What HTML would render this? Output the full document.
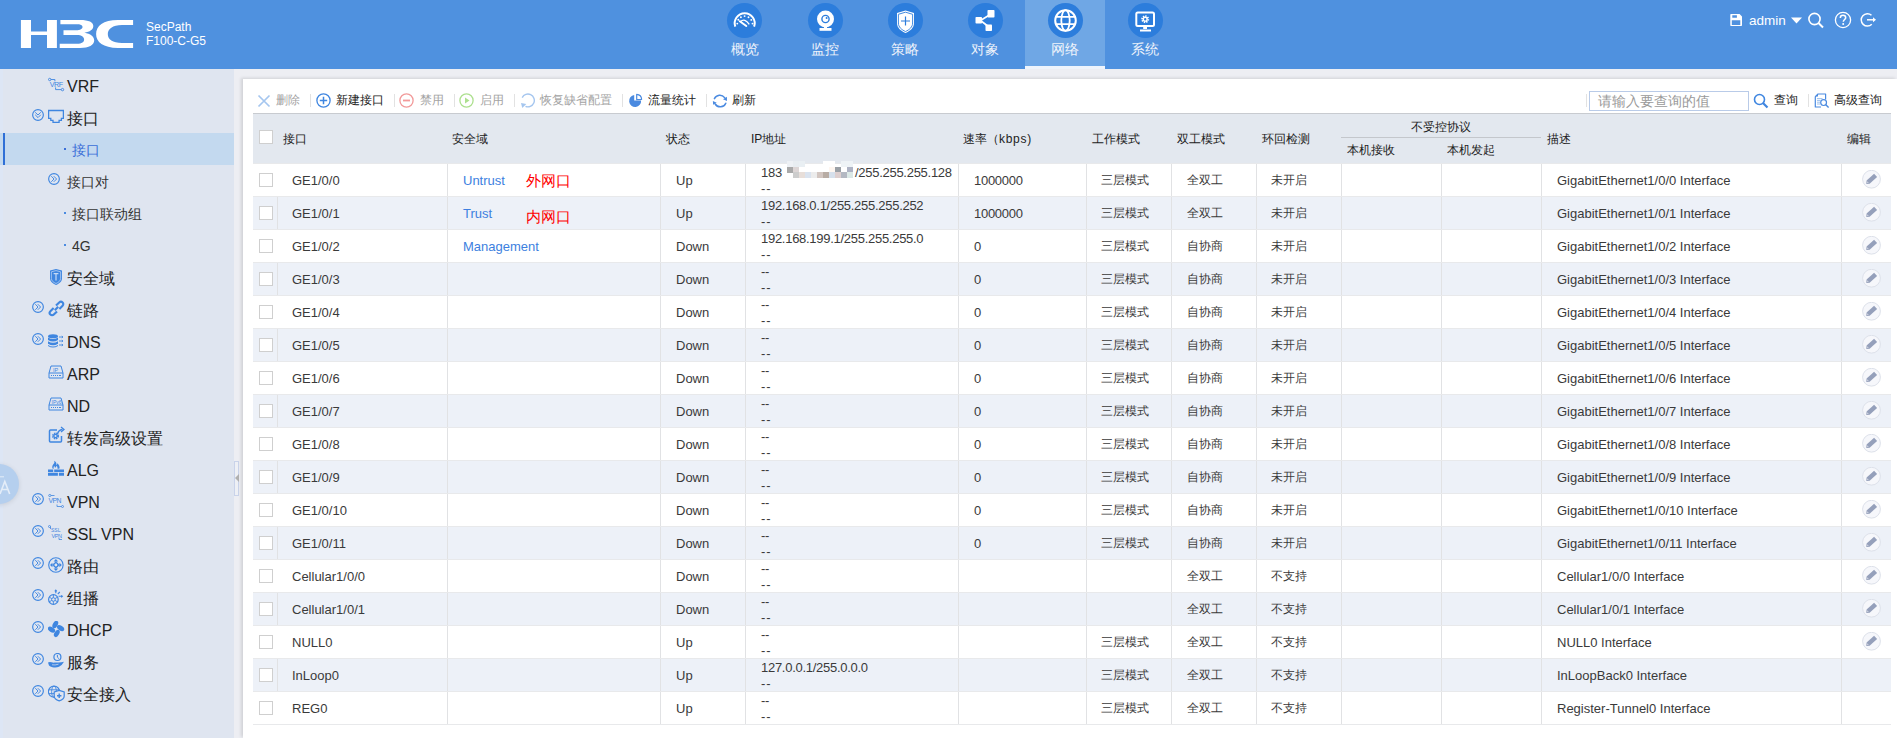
<!DOCTYPE html>
<html><head><meta charset="utf-8"><title>H3C</title>
<style>
*{box-sizing:border-box;margin:0;padding:0}
html,body{width:1897px;height:738px;overflow:hidden}
body{position:relative;background:#edeef3;font-family:"Liberation Sans",sans-serif;color:#333}
.abs{position:absolute}
#hdr{position:absolute;left:0;top:0;width:1897px;height:69px;background:#4f91df}
.nav{position:absolute;top:0;width:80px;height:69px;text-align:center;color:#eef3fb}
.nav.on{background:#6fa7e5}
.nav.on:after{content:"";position:absolute;left:0;right:0;bottom:0;height:3px;background:#eef4fc}
.nav .c{position:absolute;left:22px;top:3px;width:35px;height:35px;border-radius:50%;background:#2c7ddc}
.nav .c svg{position:absolute;left:0;top:0}
.nav .t{position:absolute;left:0;width:80px;top:40px;font-size:14px;line-height:18px;text-align:center}
#side{position:absolute;left:0;top:69px;width:234px;height:669px;background:#dfe5f0;overflow:hidden}
#side .strip{position:absolute;left:0;top:0;width:3px;height:669px;background:#dde6f5}
.si{position:absolute;left:0;width:234px;height:32px;color:#222}
.si .tx{position:absolute;left:67px;top:2px;line-height:32px;font-size:16px;white-space:nowrap}
.si.l2 .tx{font-size:14px;color:#333;top:1px}
.si.sel{background:#c3d9ef}
.si.sel:before{content:"";position:absolute;left:3px;top:0;width:2px;height:32px;background:#2f6fd6}
.si.sel .tx{color:#3b6fd8}
.si svg{position:absolute}
.dot{position:absolute;left:64px;top:15px;width:2px;height:2px;background:#4a8ae0}
#panel{position:absolute;left:243px;top:79px;width:1654px;height:659px;background:#fff;box-shadow:-2px -1px 3px rgba(0,0,0,0.12)}
.tb{position:absolute;top:0;height:20px;font-size:12px;line-height:20px;white-space:nowrap}
.sep{position:absolute;width:1px;height:13px;background:#e2e2e2}
#tbl{position:absolute;left:253px;top:113px;width:638px}
.row{position:absolute;left:253px;width:1638px;height:33px;border-top:1px solid #e8e9eb}
.row.st{background:#edf1f8}
.cell{position:absolute;top:0px;height:33px;line-height:33px;font-size:13px;white-space:nowrap;color:#3a3a3a}
.vl{position:absolute;top:0;width:1px;height:32px;background:#e1e2e4}
.cb{position:absolute;left:6px;top:9px;width:14px;height:14px;border:1px solid #cfcfcf;background:#fff}
.cj{font-size:12px}
.ip{letter-spacing:-0.28px}
</style></head><body>

<div id="hdr">
<svg class="abs" style="left:0;top:0" width="140" height="60" viewBox="0 0 140 60">
<path fill="#fff" d="M20.9 19.9H31V31.5H47V19.9H56.9V47.9H47V35H31V47.9H20.9Z"/>
<path fill="#fff" d="M60.4 19.9H80C89 19.9 93.3 22 93.3 26C93.3 29.5 90 31.8 84.4 32.8C90.5 33.8 94.2 36.5 94.2 40.5C94.2 45 89 47.9 80 47.9H59.7V43.8H77C82 43.8 84.1 42 84.1 39.5C84.1 36.8 81.5 35 77 35H63.5V30.2H76C80.5 30.2 82.5 28.8 82.5 27C82.5 25 80.5 24.2 76 24.2H60.4Z"/>
<path fill="#fff" d="M133.1 19.9V24.9H122C112.5 24.9 107.8 29 107.8 34C107.8 39.5 112.5 42.9 122 42.9H133.1V47.9H118C103 47.9 96.1 42 96.1 34C96.1 26 103 19.9 118 19.9Z"/>
</svg>
<div class="abs" style="left:146px;top:20px;font-size:12px;line-height:14px;color:#fff">SecPath<br>F100-C-G5</div>
<div class="nav" style="left:705px"><div class="c" style="left:22px"><svg width="35" height="35" viewBox="0 0 35 35"><path d="M8.3 23.7A10 10 0 1 1 27.1 23.7" fill="none" stroke="#fff" stroke-width="2"/>
 <g fill="#fff"><circle cx="11.3" cy="16.7" r="0.95"/><circle cx="10.3" cy="20.6" r="0.95"/><circle cx="13.9" cy="14.3" r="0.95"/><circle cx="17.6" cy="13.1" r="0.95"/><circle cx="21.5" cy="14.3" r="0.95"/><circle cx="24.3" cy="16.9" r="0.95"/><circle cx="25.5" cy="20.6" r="0.95"/></g>
 <path d="M12.8 18.3L19.3 23" stroke="#fff" stroke-width="2" stroke-linecap="round"/><path d="M13.7 18.5Q17.6 14.8 22.3 21.3" stroke="#fff" stroke-width="1.4" fill="none"/></svg></div><div class="t">概览</div></div>
<div class="nav" style="left:785px"><div class="c" style="left:23px"><svg width="35" height="35" viewBox="0 0 35 35"><circle cx="17.5" cy="16" r="8.5" fill="#fff"/><circle cx="17.5" cy="16" r="3.6" fill="none" stroke="#2c7ddc" stroke-width="1.4"/><circle cx="18.6" cy="15" r="1" fill="#2c7ddc"/>
 <rect x="16" y="23" width="3" height="4" fill="#fff"/><rect x="11.5" y="25" width="12" height="2.8" fill="#fff"/></svg></div><div class="t">监控</div></div>
<div class="nav" style="left:865px"><div class="c" style="left:23px"><svg width="35" height="35" viewBox="0 0 35 35"><path d="M17.5 7.5L26 10V20C26 25 22 28 17.5 30C13 28 9 25 9 20V10Z" fill="#fff"/>
 <path d="M17.5 9.2L24.6 11.3V20C24.6 24.2 21.3 26.8 17.5 28.5C13.7 26.8 10.4 24.2 10.4 20V11.3Z" fill="none" stroke="#2c7ddc" stroke-width="0.9"/>
 <path d="M17.5 13.5V22.5M13 18H22" stroke="#2c7ddc" stroke-width="1.2"/></svg></div><div class="t">策略</div></div>
<div class="nav" style="left:945px"><div class="c" style="left:23px"><svg width="35" height="35" viewBox="0 0 35 35"><path d="M12.5 17.5L23 11M12.5 17.5L21 24" stroke="#fff" stroke-width="1.6"/>
 <rect x="7.5" y="14" width="6.5" height="6.5" rx="0.8" fill="#fff"/><rect x="19.5" y="7" width="7" height="7.5" rx="0.8" fill="#fff"/><rect x="17.5" y="21.5" width="6.5" height="6.5" rx="0.8" fill="#fff"/></svg></div><div class="t">对象</div></div>
<div class="nav on" style="left:1025px"><div class="c" style="left:23px"><svg width="35" height="35" viewBox="0 0 35 35"><circle cx="17.5" cy="17.5" r="10.3" fill="none" stroke="#fff" stroke-width="2"/>
 <ellipse cx="17.5" cy="17.5" rx="4.2" ry="10.3" fill="none" stroke="#fff" stroke-width="1.8"/>
 <path d="M7.5 13.8H27.5M7.5 21.2H27.5" stroke="#fff" stroke-width="1.8"/></svg></div><div class="t">网络</div></div>
<div class="nav" style="left:1105px"><div class="c" style="left:23px"><svg width="35" height="35" viewBox="0 0 35 35"><rect x="8.3" y="9.5" width="17.7" height="13.5" rx="1.5" fill="none" stroke="#fff" stroke-width="2"/>
 <rect x="15.2" y="23" width="3.8" height="3" fill="#fff"/><rect x="12" y="26.5" width="11" height="2" fill="#fff"/>
 <circle cx="17.2" cy="16.2" r="3" fill="none" stroke="#fff" stroke-width="2" stroke-dasharray="1.3 1"/><circle cx="17.2" cy="16.2" r="1.9" fill="none" stroke="#fff" stroke-width="1.4"/></svg></div><div class="t">系统</div></div>
<svg class="abs" style="left:1730px;top:14px" width="12" height="12" viewBox="0 0 12 12">
<path fill="#fff" fill-rule="evenodd" d="M0.3 0.8Q0.3 0 1 0H9.6L12 2.4V11.3Q12 12 11.3 12H1Q0.3 12 0.3 11.3ZM2.3 1.2V3.8H6.9V1.2ZM1.8 6.2V10.9H10.3V6.2Z"/>
</svg>
<div class="abs" style="left:1749px;top:12px;font-size:13.5px;line-height:18px;color:#fff">admin</div>
<svg class="abs" style="left:1790px;top:17px" width="13" height="7" viewBox="0 0 13 7"><path d="M1 0.5H12L6.5 6.5Z" fill="#fff"/></svg>
<svg class="abs" style="left:1807px;top:12px" width="18" height="17" viewBox="0 0 18 17"><circle cx="7.5" cy="7" r="5.6" fill="none" stroke="#fff" stroke-width="1.6"/><path d="M11.5 11L16 15.5" stroke="#fff" stroke-width="2"/></svg>
<svg class="abs" style="left:1834px;top:11px" width="18" height="18" viewBox="0 0 18 18"><circle cx="9" cy="9" r="7.6" fill="none" stroke="#fff" stroke-width="1.3"/><path d="M6.3 7C6.3 5.2 7.5 4.3 9 4.3C10.6 4.3 11.7 5.3 11.7 6.7C11.7 8.4 9.3 8.8 9.3 10.8" fill="none" stroke="#fff" stroke-width="1.5"/><circle cx="9.2" cy="13" r="1" fill="#fff"/></svg>
<svg class="abs" style="left:1859px;top:12px" width="18" height="16" viewBox="0 0 18 16"><path d="M12.5 3.2A6.2 6.2 0 1 0 12.8 12.3" fill="none" stroke="#fff" stroke-width="1.5"/><path d="M8 7.8H15.5" stroke="#fff" stroke-width="1.5"/><path d="M14 5.3L17 7.8L14 10.3Z" fill="#fff"/></svg>
</div>
<div id="side"><div class="strip"></div>
<div class="si" style="top:0px"><svg style="left:48px;top:8px" width="17" height="15" viewBox="0 0 17 15"><circle cx="1.7" cy="2.5" r="1.2" fill="none" stroke="#3f86e0" stroke-width="0.9"/><path d="M2.9 2.5H6.9V4.3" stroke="#3f86e0" stroke-width="0.9" fill="none"/><text x="1.8" y="9.9" font-size="7.2" font-family="Liberation Sans" fill="#3f86e0" letter-spacing="-0.5" transform="scale(1 1)">VRF</text><path d="M7.6 10.4V12.6H13.2" stroke="#3f86e0" stroke-width="0.9" fill="none"/><circle cx="14.5" cy="12.6" r="1.2" fill="none" stroke="#3f86e0" stroke-width="0.9"/></svg><div class="tx">VRF</div></div>
<div class="si" style="top:32px"><svg style="left:32px;top:8px" width="12" height="12" viewBox="0 0 12 12"><circle cx="6" cy="6" r="5.35" fill="none" stroke="#3f86e0" stroke-width="1.15"/><path d="M3.2 3.3L6 6L8.8 3.3M3.2 5.8L6 8.6L8.8 5.8" fill="none" stroke="#3f86e0" stroke-width="0.95"/></svg><svg style="left:48px;top:8px" width="16" height="15" viewBox="0 0 16 15"><path d="M0.6 1.5H15.4V9.4H13.4V11.3H11.1V13.4H5V11.3H2.8V9.4H0.6Z" fill="none" stroke="#3f86e0" stroke-width="1.3"/></svg><div class="tx">接口</div></div>
<div class="si l2 sel" style="top:64px"><div class="dot" style="background:#3b6fd8"></div><div class="tx" style="left:72px">接口</div></div>
<div class="si l2" style="top:96px"><svg style="left:48px;top:8px" width="12" height="12" viewBox="0 0 12 12"><circle cx="6" cy="6" r="5.35" fill="none" stroke="#3f86e0" stroke-width="1.15"/><path d="M3.3 3.2L6 6L3.3 8.8M5.8 3.2L8.6 6L5.8 8.8" fill="none" stroke="#3f86e0" stroke-width="0.95"/></svg><div class="tx">接口对</div></div>
<div class="si l2" style="top:128px"><div class="dot"></div><div class="tx" style="left:72px">接口联动组</div></div>
<div class="si l2" style="top:160px"><div class="dot"></div><div class="tx" style="left:72px">4G</div></div>
<div class="si" style="top:192px"><svg style="left:49px;top:7px" width="14" height="18" viewBox="0 0 14 18"><path d="M7 1L13 2.6V10.5C13 13.5 10.5 15.5 7 17C3.5 15.5 1 13.5 1 10.5V2.6Z" fill="#3f86e0"/><path d="M7 2.6L11.6 3.8V10.4C11.6 12.8 9.6 14.4 7 15.5C4.4 14.4 2.4 12.8 2.4 10.4V3.8Z" fill="none" stroke="#c5daf5" stroke-width="0.7"/><path d="M4.6 5.6H9.4M7 5.6V12.5" stroke="#c5daf5" stroke-width="1.2"/></svg><div class="tx">安全域</div></div>
<div class="si" style="top:224px"><svg style="left:32px;top:8px" width="12" height="12" viewBox="0 0 12 12"><circle cx="6" cy="6" r="5.35" fill="none" stroke="#3f86e0" stroke-width="1.15"/><path d="M3.3 3.2L6 6L3.3 8.8M5.8 3.2L8.6 6L5.8 8.8" fill="none" stroke="#3f86e0" stroke-width="0.95"/></svg><svg style="left:48px;top:7px" width="17" height="17" viewBox="0 0 17 17"><g fill="none" stroke="#3f86e0" stroke-width="2.1"><path d="M6.8 10.2L10.2 6.8"/><path d="M5.6 8L2.4 11.2A2.2 2.2 0 0 0 5.8 14.6L9 11.4"/><path d="M8 5.6L11.2 2.4A2.2 2.2 0 0 1 14.6 5.8L11.4 9"/></g></svg><div class="tx">链路</div></div>
<div class="si" style="top:256px"><svg style="left:32px;top:8px" width="12" height="12" viewBox="0 0 12 12"><circle cx="6" cy="6" r="5.35" fill="none" stroke="#3f86e0" stroke-width="1.15"/><path d="M3.3 3.2L6 6L3.3 8.8M5.8 3.2L8.6 6L5.8 8.8" fill="none" stroke="#3f86e0" stroke-width="0.95"/></svg><svg style="left:48px;top:9px" width="16" height="14" viewBox="0 0 16 14"><g fill="#3f86e0"><ellipse cx="5" cy="2.2" rx="5" ry="2"/><path d="M0 3.5Q5 6.5 10 3.5V6Q5 9 0 6Z"/><path d="M0 7.3Q5 10.3 10 7.3V9.8Q5 12.8 0 9.8Z"/><path d="M0 11Q5 14 10 11V12Q5 15 0 12Z"/></g><path d="M11 3H15M11 7H15M11 11H15" stroke="#3f86e0" stroke-width="0.9"/><path d="M13.8 2L15 3L13.8 4M13.8 6L15 7L13.8 8M13.8 10L15 11L13.8 12" stroke="#3f86e0" stroke-width="0.8" fill="none"/></svg><div class="tx">DNS</div></div>
<div class="si" style="top:288px"><svg style="left:48px;top:8px" width="16" height="14" viewBox="0 0 16 14"><path d="M3 1H13L15 8V13H1V8Z" fill="none" stroke="#3f86e0" stroke-width="1"/><path d="M1 8H15" stroke="#3f86e0" stroke-width="1"/><text x="5" y="6.8" font-size="5.5" font-family="Liberation Sans" fill="#3f86e0">IP</text><path d="M3 10.5H4M5 10.5H6M7 10.5H8M9 10.5H10M11 10.5H13" stroke="#3f86e0" stroke-width="1.2"/></svg><div class="tx">ARP</div></div>
<div class="si" style="top:320px"><svg style="left:48px;top:8px" width="16" height="14" viewBox="0 0 16 14"><path d="M3 1H13L15 8V13H1V8Z" fill="none" stroke="#3f86e0" stroke-width="1"/><path d="M1 8H15" stroke="#3f86e0" stroke-width="1"/><text x="3.5" y="6.8" font-size="5" font-family="Liberation Sans" fill="#3f86e0">IPv6</text><path d="M3 10.5H4M5 10.5H6M7 10.5H8M9 10.5H10M11 10.5H13" stroke="#3f86e0" stroke-width="1.2"/></svg><div class="tx">ND</div></div>
<div class="si" style="top:352px"><svg style="left:48px;top:5px" width="17" height="17" viewBox="0 0 17 17"><path d="M9 4H2.5Q1.5 4 1.5 5V15Q1.5 16 2.5 16H12.5Q13.5 16 13.5 15V10" fill="none" stroke="#3f86e0" stroke-width="1.5"/><path d="M9.5 8.5Q10 4 14.5 3.5" fill="none" stroke="#3f86e0" stroke-width="1.3"/><path d="M13 1L16 3.5L13 6" fill="none" stroke="#3f86e0" stroke-width="1.3"/><circle cx="7.5" cy="10" r="2.6" fill="none" stroke="#3f86e0" stroke-width="1.8" stroke-dasharray="1.4 0.7"/><circle cx="7.5" cy="10" r="1.6" fill="none" stroke="#3f86e0" stroke-width="1.2"/></svg><div class="tx">转发高级设置</div></div>
<div class="si" style="top:384px"><svg style="left:48px;top:6px" width="17" height="18" viewBox="0 0 17 18"><path d="M4.5 9.6C3.6 7.5 5 5.5 6.3 4C6.6 3 6.3 2.4 6 1.8C8 2.3 8.8 4.5 8.3 6.2C8.9 5.6 9.3 4.8 9.5 4.2C10.9 5.5 12.3 8 11.3 9.8H9.5C9.7 8.6 9.2 7.4 8.5 6.8C8.3 7.9 7.6 8.6 7 9C7 8.2 6.6 7.5 6.2 7.1C5.6 7.8 5.4 8.8 5.9 9.8Z" fill="#3f86e0"/><path d="M0 10.4H5.2V13H0ZM6.2 10.4H16V13H6.2ZM0 13.8H9.9V16.8H0ZM10.9 13.8H16V16.8H10.9Z" fill="#3f86e0"/></svg><div class="tx">ALG</div></div>
<div class="si" style="top:416px"><svg style="left:32px;top:8px" width="12" height="12" viewBox="0 0 12 12"><circle cx="6" cy="6" r="5.35" fill="none" stroke="#3f86e0" stroke-width="1.15"/><path d="M3.3 3.2L6 6L3.3 8.8M5.8 3.2L8.6 6L5.8 8.8" fill="none" stroke="#3f86e0" stroke-width="0.95"/></svg><svg style="left:48px;top:9px" width="16" height="14" viewBox="0 0 16 14"><circle cx="1.8" cy="1.5" r="1.1" fill="none" stroke="#3f86e0" stroke-width="0.8"/><path d="M3 1.5H6.5" stroke="#3f86e0" stroke-width="0.8"/><text x="0.5" y="9" font-size="6.8" font-family="Liberation Sans" fill="#3f86e0" letter-spacing="-0.5">VPN</text><path d="M9 10.5V12.5H13.5" stroke="#3f86e0" stroke-width="0.8" fill="none"/><circle cx="14.5" cy="12.5" r="1" fill="none" stroke="#3f86e0" stroke-width="0.8"/></svg><div class="tx">VPN</div></div>
<div class="si" style="top:448px"><svg style="left:32px;top:8px" width="12" height="12" viewBox="0 0 12 12"><circle cx="6" cy="6" r="5.35" fill="none" stroke="#3f86e0" stroke-width="1.15"/><path d="M3.3 3.2L6 6L3.3 8.8M5.8 3.2L8.6 6L5.8 8.8" fill="none" stroke="#3f86e0" stroke-width="0.95"/></svg><svg style="left:48px;top:8px" width="16" height="16" viewBox="0 0 16 16"><circle cx="1.5" cy="1.5" r="1" fill="none" stroke="#3f86e0" stroke-width="0.8"/><path d="M2.5 1.5V4" stroke="#3f86e0" stroke-width="0.8"/><text x="3" y="7" font-size="5" font-family="Liberation Sans" fill="#3f86e0">SSL</text><text x="3.5" y="12.5" font-size="5.5" font-family="Liberation Sans" fill="#3f86e0" letter-spacing="-0.4">VPN</text><path d="M11 13V14.5H14" stroke="#3f86e0" stroke-width="0.8" fill="none"/></svg><div class="tx">SSL VPN</div></div>
<div class="si" style="top:480px"><svg style="left:32px;top:8px" width="12" height="12" viewBox="0 0 12 12"><circle cx="6" cy="6" r="5.35" fill="none" stroke="#3f86e0" stroke-width="1.15"/><path d="M3.3 3.2L6 6L3.3 8.8M5.8 3.2L8.6 6L5.8 8.8" fill="none" stroke="#3f86e0" stroke-width="0.95"/></svg><svg style="left:48px;top:8px" width="16" height="16" viewBox="0 0 16 16"><circle cx="7.9" cy="8" r="7.2" fill="none" stroke="#3f86e0" stroke-width="1.1"/><path d="M7.9 2.1L10.2 4.5H5.6ZM7.9 13.9L10.2 11.5H5.6ZM2 8L4.4 5.7V10.3ZM13.8 8L11.4 5.7V10.3Z" fill="#3f86e0"/><path d="M7.9 4.4V5.9M7.9 10.1V11.6M4.3 8H5.8M10 8H11.5" stroke="#3f86e0" stroke-width="1.6"/><circle cx="7.9" cy="8" r="2.1" fill="none" stroke="#3f86e0" stroke-width="1.3"/></svg><div class="tx">路由</div></div>
<div class="si" style="top:512px"><svg style="left:32px;top:8px" width="12" height="12" viewBox="0 0 12 12"><circle cx="6" cy="6" r="5.35" fill="none" stroke="#3f86e0" stroke-width="1.15"/><path d="M3.3 3.2L6 6L3.3 8.8M5.8 3.2L8.6 6L5.8 8.8" fill="none" stroke="#3f86e0" stroke-width="0.95"/></svg><svg style="left:48px;top:8px" width="17" height="17" viewBox="0 0 17 17"><circle cx="5.4" cy="10.5" r="4.8" fill="none" stroke="#3f86e0" stroke-width="1.2"/><circle cx="5.4" cy="10.5" r="1.8" fill="none" stroke="#3f86e0" stroke-width="1"/><path d="M5.4 5.7V8.7M5.4 12.3V15.3M1.2 8.1L3.8 9.6M7 11.4L9.6 12.9M1.2 12.9L3.8 11.4M7 9.6L9.6 8.1" stroke="#3f86e0" stroke-width="0.9"/><path d="M7.8 4.2V1.5M6.8 2.4L7.8 1.2L8.8 2.4M9.8 5L11.8 3M10.6 7.3H14.2M13.2 6.3L14.4 7.3L13.2 8.3" fill="none" stroke="#3f86e0" stroke-width="1.1"/></svg><div class="tx">组播</div></div>
<div class="si" style="top:544px"><svg style="left:32px;top:8px" width="12" height="12" viewBox="0 0 12 12"><circle cx="6" cy="6" r="5.35" fill="none" stroke="#3f86e0" stroke-width="1.15"/><path d="M3.3 3.2L6 6L3.3 8.8M5.8 3.2L8.6 6L5.8 8.8" fill="none" stroke="#3f86e0" stroke-width="0.95"/></svg><svg style="left:48px;top:8px" width="17" height="17" viewBox="0 0 17 17"><g fill="#3f86e0"><ellipse cx="7.3" cy="3.5" rx="4" ry="2.4" transform="rotate(-60 7.3 3.5)"/><ellipse cx="12.6" cy="7.1" rx="4" ry="2.4" transform="rotate(32 12.6 7.1)"/><ellipse cx="8.8" cy="12.4" rx="4" ry="2.4" transform="rotate(-60 8.8 12.4)"/><ellipse cx="3.5" cy="8.6" rx="4" ry="2.4" transform="rotate(32 3.5 8.6)"/></g></svg><div class="tx">DHCP</div></div>
<div class="si" style="top:576px"><svg style="left:32px;top:8px" width="12" height="12" viewBox="0 0 12 12"><circle cx="6" cy="6" r="5.35" fill="none" stroke="#3f86e0" stroke-width="1.15"/><path d="M3.3 3.2L6 6L3.3 8.8M5.8 3.2L8.6 6L5.8 8.8" fill="none" stroke="#3f86e0" stroke-width="0.95"/></svg><svg style="left:48px;top:8px" width="17" height="17" viewBox="0 0 17 17"><circle cx="9.4" cy="4" r="3.5" fill="none" stroke="#3f86e0" stroke-width="1.2"/><path d="M9.4 1.9V4.2L10.9 5.6" fill="none" stroke="#3f86e0" stroke-width="1"/><path d="M0 9.5Q1.5 8.6 3.5 9.2Q5 9.8 6.5 9.6L10.5 9.6Q13.5 9.6 16 8.8Q14.5 11.8 11 13.8Q8 15 4.5 14.2Q2 13.6 1 12.6Z" fill="#3f86e0"/><path d="M4 11.8Q7 12.4 10.5 11.2" fill="none" stroke="#dfe5f0" stroke-width="0.7"/></svg><div class="tx">服务</div></div>
<div class="si" style="top:608px"><svg style="left:32px;top:8px" width="12" height="12" viewBox="0 0 12 12"><circle cx="6" cy="6" r="5.35" fill="none" stroke="#3f86e0" stroke-width="1.15"/><path d="M3.3 3.2L6 6L3.3 8.8M5.8 3.2L8.6 6L5.8 8.8" fill="none" stroke="#3f86e0" stroke-width="0.95"/></svg><svg style="left:48px;top:8px" width="17" height="17" viewBox="0 0 17 17"><circle cx="6" cy="6.7" r="5.6" fill="none" stroke="#3f86e0" stroke-width="1.1"/><ellipse cx="6" cy="6.7" rx="2.4" ry="5.6" fill="none" stroke="#3f86e0" stroke-width="0.9"/><path d="M0.6 4.8H11.4M0.6 8.6H6" stroke="#3f86e0" stroke-width="0.9"/><path d="M11.2 5.4L16.2 7V11Q16.2 14.5 11.2 15.9Q6.2 14.5 6.2 11V7Z" fill="#dfe5f0" stroke="#3f86e0" stroke-width="1.2"/><path d="M11.2 8.6V13M9 10.8H13.4" stroke="#3f86e0" stroke-width="1.4"/></svg><div class="tx">安全接入</div></div>
</div>
<div class="abs" style="left:234px;top:69px;width:9px;height:669px;background:#edeef3"></div>
<div class="abs" style="left:234px;top:461px;width:5px;height:35px;border:1px solid #c9d3ea;background:#eef0f5"></div>
<svg class="abs" style="left:235px;top:474px" width="4" height="8" viewBox="0 0 4 8"><path d="M4 0V8L0 4Z" fill="#b0b0b0"/></svg>
<div id="panel"></div>
<svg class="abs" style="left:257px;top:94px" width="14" height="14" viewBox="0 0 14 14"><path d="M1.5 1.5L12.5 12.5M12.5 1.5L1.5 12.5" stroke="#a5c6ef" stroke-width="1.7"/></svg>
<div class="tb abs" style="left:276px;top:90px;color:#a3a3a3">删除</div>
<div class="sep" style="left:310px;top:94px"></div>
<svg class="abs" style="left:316px;top:93px" width="15" height="15" viewBox="0 0 15 15"><circle cx="7.5" cy="7.5" r="6.6" fill="none" stroke="#3f86e0" stroke-width="1.3"/><path d="M7.5 3.8V11.2M3.8 7.5H11.2" stroke="#3f86e0" stroke-width="1.5"/></svg>
<div class="tb abs" style="left:336px;top:90px;color:#222">新建接口</div>
<div class="sep" style="left:394px;top:94px"></div>
<svg class="abs" style="left:399px;top:93px" width="15" height="15" viewBox="0 0 15 15"><circle cx="7.5" cy="7.5" r="6.6" fill="none" stroke="#f29a9a" stroke-width="1.3"/><path d="M4 7.5H11" stroke="#f29a9a" stroke-width="1.8"/></svg>
<div class="tb abs" style="left:420px;top:90px;color:#a3a3a3">禁用</div>
<div class="sep" style="left:454px;top:94px"></div>
<svg class="abs" style="left:459px;top:93px" width="15" height="15" viewBox="0 0 15 15"><circle cx="7.5" cy="7.5" r="6.6" fill="none" stroke="#ade08f" stroke-width="1.3"/><path d="M6 4.5V10.5L10.5 7.5Z" fill="#ade08f"/></svg>
<div class="tb abs" style="left:480px;top:90px;color:#a3a3a3">启用</div>
<div class="sep" style="left:514px;top:94px"></div>
<svg class="abs" style="left:520px;top:93px" width="16" height="16" viewBox="0 0 16 16"><path d="M2.2 4.6A6.4 6.4 0 1 1 5.5 13.4" fill="none" stroke="#a5c6ef" stroke-width="1.4"/><path d="M1 10L6.3 11L2.3 15Z" fill="#a5c6ef"/></svg>
<div class="tb abs" style="left:540px;top:90px;color:#a3a3a3">恢复缺省配置</div>
<div class="sep" style="left:622px;top:94px"></div>
<svg class="abs" style="left:628px;top:93px" width="15" height="15" viewBox="0 0 15 15"><path d="M6.2 7.4V2A6 6 0 1 0 13.1 7.4Z" fill="#4a8ae0"/><path d="M8.7 1.3A5.3 5.3 0 0 1 13.6 6.3L8.7 6.6Z" fill="none" stroke="#4a8ae0" stroke-width="1.2" stroke-linejoin="round"/></svg>
<div class="tb abs" style="left:648px;top:90px;color:#222">流量统计</div>
<div class="sep" style="left:706px;top:94px"></div>
<svg class="abs" style="left:712px;top:93px" width="16" height="16" viewBox="0 0 16 16"><path d="M2.4 5.6A6 6 0 0 1 12.6 4.6M13.8 10.2A6 6 0 0 1 3.2 11" fill="none" stroke="#4a8ae0" stroke-width="1.5" stroke-linecap="round"/><path d="M11 6.3L14.9 3.7L15 7.9Z" fill="#4a8ae0"/><path d="M0.9 7.9L4.7 9.8L1.1 11.7Z" fill="#4a8ae0"/></svg>
<div class="tb abs" style="left:732px;top:90px;color:#222">刷新</div>
<div class="sep" style="left:1586px;top:94px"></div>
<div class="abs" style="left:1589px;top:91px;width:160px;height:20px;border:1px solid #b9cbe8;background:#fff"></div>
<div class="abs" style="left:1598px;top:91px;font-size:14px;line-height:20px;color:#9a9a9a;white-space:nowrap">请输入要查询的值</div>
<svg class="abs" style="left:1753px;top:93px" width="16" height="16" viewBox="0 0 16 16"><circle cx="6.5" cy="6.5" r="5" fill="none" stroke="#3f86e0" stroke-width="1.6"/><path d="M10 10L14.5 14.5" stroke="#3f86e0" stroke-width="2.2"/></svg>
<div class="tb abs" style="left:1774px;top:90px;color:#222">查询</div>
<div class="sep" style="left:1808px;top:94px"></div>
<svg class="abs" style="left:1814px;top:93px" width="16" height="16" viewBox="0 0 16 16"><path d="M1.3 3.6L4 1H11.6V6.5M7 14H1.3V3.6" fill="none" stroke="#4a8ae0" stroke-width="1.2" stroke-linejoin="round"/><path d="M1.3 3.6L4 1V3.6Z" fill="#4a8ae0"/><path d="M3 5.6H8.5M3 7.4H6.5M3 9.2H6M3 11H6" stroke="#9cc0ee" stroke-width="1"/><circle cx="9.6" cy="9.6" r="2.9" fill="none" stroke="#4a8ae0" stroke-width="1.2"/><path d="M11.8 11.8L14.6 14.6" stroke="#4a8ae0" stroke-width="1.4"/></svg>
<div class="tb abs" style="left:1834px;top:90px;color:#222">高级查询</div>
<div class="abs" style="left:253px;top:113px;width:1638px;height:50px;background:#e3e8ef;border-top:1px solid #c8cbd0"></div>
<div class="cb abs" style="left:259px;top:130px"></div>
<div class="abs" style="left:283px;top:130px;font-size:12px;line-height:18px;color:#222;white-space:nowrap">接口</div>
<div class="abs" style="left:452px;top:130px;font-size:12px;line-height:18px;color:#222;white-space:nowrap">安全域</div>
<div class="abs" style="left:666px;top:130px;font-size:12px;line-height:18px;color:#222;white-space:nowrap">状态</div>
<div class="abs" style="left:751px;top:130px;font-size:12px;line-height:18px;color:#222;white-space:nowrap">IP地址</div>
<div class="abs" style="left:963px;top:130px;font-size:12px;line-height:18px;color:#222;white-space:nowrap">速率（<span style="letter-spacing:0.7px">kbps)</span></div>
<div class="abs" style="left:1092px;top:130px;font-size:12px;line-height:18px;color:#222;white-space:nowrap">工作模式</div>
<div class="abs" style="left:1177px;top:130px;font-size:12px;line-height:18px;color:#222;white-space:nowrap">双工模式</div>
<div class="abs" style="left:1262px;top:130px;font-size:12px;line-height:18px;color:#222;white-space:nowrap">环回检测</div>
<div class="abs" style="left:1547px;top:130px;font-size:12px;line-height:18px;color:#222;white-space:nowrap">描述</div>
<div class="abs" style="left:1847px;top:130px;font-size:12px;line-height:18px;color:#222;white-space:nowrap">编辑</div>
<div class="abs" style="left:1411px;top:118px;font-size:12px;line-height:18px;color:#222;white-space:nowrap">不受控协议</div>
<div class="abs" style="left:1341px;top:137px;width:200px;height:1px;background:#c4c7cc"></div>
<div class="abs" style="left:1347px;top:141px;font-size:12px;line-height:18px;color:#222;white-space:nowrap">本机接收</div>
<div class="abs" style="left:1447px;top:141px;font-size:12px;line-height:18px;color:#222;white-space:nowrap">本机发起</div>
<div class="row" style="top:163px">
<div class="vl" style="left:194px"></div>
<div class="vl" style="left:407px"></div>
<div class="vl" style="left:492px"></div>
<div class="vl" style="left:705px"></div>
<div class="vl" style="left:833px"></div>
<div class="vl" style="left:918px"></div>
<div class="vl" style="left:1003px"></div>
<div class="vl" style="left:1088px"></div>
<div class="vl" style="left:1188px"></div>
<div class="vl" style="left:1288px"></div>
<div class="vl" style="left:1588px"></div>
<div class="cb"></div>
<div class="cell" style="left:39px">GE1/0/0</div>
<div class="cell" style="left:210px;color:#3d7fe0">Untrust</div>
<div class="cell" style="left:273px;color:#f00;font-size:15px;top:0px">外网口</div>
<div class="cell" style="left:423px">Up</div>
<div class="cell ip" style="left:508px;top:-8px">183</div>
<div class="cell ip" style="left:602px;top:-8px">/255.255.255.128</div>
<div class="cell" style="left:508px;top:8px;letter-spacing:1px">--</div>
<div class="cell ip" style="left:721px">1000000</div>
<div class="cell cj" style="left:848px">三层模式</div>
<div class="cell cj" style="left:934px">全双工</div>
<div class="cell cj" style="left:1018px">未开启</div>
<div class="cell" style="left:1304px">GigabitEthernet1/0/0 Interface</div>
<svg class="abs" style="left:1609px;top:6px" width="20" height="20" viewBox="0 0 20 20"><circle cx="9.5" cy="9.2" r="8.9" fill="#f6f7fb" stroke="#dde1ea" stroke-width="1"/><path d="M4.3 14L4.6 10.5L12.1 3.7L15.1 6.9L7.6 13.7Z" fill="#95a0bb"/><path d="M5.2 12.8L5.6 11.6L6.6 12.5Z" fill="#fff"/></svg>
</div>
<div class="row st" style="top:196px">
<div class="vl" style="left:24px"></div>
<div class="vl" style="left:194px"></div>
<div class="vl" style="left:407px"></div>
<div class="vl" style="left:492px"></div>
<div class="vl" style="left:705px"></div>
<div class="vl" style="left:833px"></div>
<div class="vl" style="left:918px"></div>
<div class="vl" style="left:1003px"></div>
<div class="vl" style="left:1088px"></div>
<div class="vl" style="left:1188px"></div>
<div class="vl" style="left:1288px"></div>
<div class="vl" style="left:1588px"></div>
<div class="cb"></div>
<div class="cell" style="left:39px">GE1/0/1</div>
<div class="cell" style="left:210px;color:#3d7fe0">Trust</div>
<div class="cell" style="left:273px;color:#f00;font-size:15px;top:3px">内网口</div>
<div class="cell" style="left:423px">Up</div>
<div class="cell ip" style="left:508px;top:-8px">192.168.0.1/255.255.255.252</div>
<div class="cell" style="left:508px;top:8px;letter-spacing:1px">--</div>
<div class="cell ip" style="left:721px">1000000</div>
<div class="cell cj" style="left:848px">三层模式</div>
<div class="cell cj" style="left:934px">全双工</div>
<div class="cell cj" style="left:1018px">未开启</div>
<div class="cell" style="left:1304px">GigabitEthernet1/0/1 Interface</div>
<svg class="abs" style="left:1609px;top:6px" width="20" height="20" viewBox="0 0 20 20"><circle cx="9.5" cy="9.2" r="8.9" fill="#f6f7fb" stroke="#dde1ea" stroke-width="1"/><path d="M4.3 14L4.6 10.5L12.1 3.7L15.1 6.9L7.6 13.7Z" fill="#95a0bb"/><path d="M5.2 12.8L5.6 11.6L6.6 12.5Z" fill="#fff"/></svg>
</div>
<div class="row" style="top:229px">
<div class="vl" style="left:194px"></div>
<div class="vl" style="left:407px"></div>
<div class="vl" style="left:492px"></div>
<div class="vl" style="left:705px"></div>
<div class="vl" style="left:833px"></div>
<div class="vl" style="left:918px"></div>
<div class="vl" style="left:1003px"></div>
<div class="vl" style="left:1088px"></div>
<div class="vl" style="left:1188px"></div>
<div class="vl" style="left:1288px"></div>
<div class="vl" style="left:1588px"></div>
<div class="cb"></div>
<div class="cell" style="left:39px">GE1/0/2</div>
<div class="cell" style="left:210px;color:#3d7fe0">Management</div>
<div class="cell" style="left:423px">Down</div>
<div class="cell ip" style="left:508px;top:-8px">192.168.199.1/255.255.255.0</div>
<div class="cell" style="left:508px;top:8px;letter-spacing:1px">--</div>
<div class="cell ip" style="left:721px">0</div>
<div class="cell cj" style="left:848px">三层模式</div>
<div class="cell cj" style="left:934px">自协商</div>
<div class="cell cj" style="left:1018px">未开启</div>
<div class="cell" style="left:1304px">GigabitEthernet1/0/2 Interface</div>
<svg class="abs" style="left:1609px;top:6px" width="20" height="20" viewBox="0 0 20 20"><circle cx="9.5" cy="9.2" r="8.9" fill="#f6f7fb" stroke="#dde1ea" stroke-width="1"/><path d="M4.3 14L4.6 10.5L12.1 3.7L15.1 6.9L7.6 13.7Z" fill="#95a0bb"/><path d="M5.2 12.8L5.6 11.6L6.6 12.5Z" fill="#fff"/></svg>
</div>
<div class="row st" style="top:262px">
<div class="vl" style="left:24px"></div>
<div class="vl" style="left:194px"></div>
<div class="vl" style="left:407px"></div>
<div class="vl" style="left:492px"></div>
<div class="vl" style="left:705px"></div>
<div class="vl" style="left:833px"></div>
<div class="vl" style="left:918px"></div>
<div class="vl" style="left:1003px"></div>
<div class="vl" style="left:1088px"></div>
<div class="vl" style="left:1188px"></div>
<div class="vl" style="left:1288px"></div>
<div class="vl" style="left:1588px"></div>
<div class="cb"></div>
<div class="cell" style="left:39px">GE1/0/3</div>
<div class="cell" style="left:423px">Down</div>
<div class="cell ip" style="left:508px;top:-8px">--</div>
<div class="cell" style="left:508px;top:8px;letter-spacing:1px">--</div>
<div class="cell ip" style="left:721px">0</div>
<div class="cell cj" style="left:848px">三层模式</div>
<div class="cell cj" style="left:934px">自协商</div>
<div class="cell cj" style="left:1018px">未开启</div>
<div class="cell" style="left:1304px">GigabitEthernet1/0/3 Interface</div>
<svg class="abs" style="left:1609px;top:6px" width="20" height="20" viewBox="0 0 20 20"><circle cx="9.5" cy="9.2" r="8.9" fill="#f6f7fb" stroke="#dde1ea" stroke-width="1"/><path d="M4.3 14L4.6 10.5L12.1 3.7L15.1 6.9L7.6 13.7Z" fill="#95a0bb"/><path d="M5.2 12.8L5.6 11.6L6.6 12.5Z" fill="#fff"/></svg>
</div>
<div class="row" style="top:295px">
<div class="vl" style="left:194px"></div>
<div class="vl" style="left:407px"></div>
<div class="vl" style="left:492px"></div>
<div class="vl" style="left:705px"></div>
<div class="vl" style="left:833px"></div>
<div class="vl" style="left:918px"></div>
<div class="vl" style="left:1003px"></div>
<div class="vl" style="left:1088px"></div>
<div class="vl" style="left:1188px"></div>
<div class="vl" style="left:1288px"></div>
<div class="vl" style="left:1588px"></div>
<div class="cb"></div>
<div class="cell" style="left:39px">GE1/0/4</div>
<div class="cell" style="left:423px">Down</div>
<div class="cell ip" style="left:508px;top:-8px">--</div>
<div class="cell" style="left:508px;top:8px;letter-spacing:1px">--</div>
<div class="cell ip" style="left:721px">0</div>
<div class="cell cj" style="left:848px">三层模式</div>
<div class="cell cj" style="left:934px">自协商</div>
<div class="cell cj" style="left:1018px">未开启</div>
<div class="cell" style="left:1304px">GigabitEthernet1/0/4 Interface</div>
<svg class="abs" style="left:1609px;top:6px" width="20" height="20" viewBox="0 0 20 20"><circle cx="9.5" cy="9.2" r="8.9" fill="#f6f7fb" stroke="#dde1ea" stroke-width="1"/><path d="M4.3 14L4.6 10.5L12.1 3.7L15.1 6.9L7.6 13.7Z" fill="#95a0bb"/><path d="M5.2 12.8L5.6 11.6L6.6 12.5Z" fill="#fff"/></svg>
</div>
<div class="row st" style="top:328px">
<div class="vl" style="left:24px"></div>
<div class="vl" style="left:194px"></div>
<div class="vl" style="left:407px"></div>
<div class="vl" style="left:492px"></div>
<div class="vl" style="left:705px"></div>
<div class="vl" style="left:833px"></div>
<div class="vl" style="left:918px"></div>
<div class="vl" style="left:1003px"></div>
<div class="vl" style="left:1088px"></div>
<div class="vl" style="left:1188px"></div>
<div class="vl" style="left:1288px"></div>
<div class="vl" style="left:1588px"></div>
<div class="cb"></div>
<div class="cell" style="left:39px">GE1/0/5</div>
<div class="cell" style="left:423px">Down</div>
<div class="cell ip" style="left:508px;top:-8px">--</div>
<div class="cell" style="left:508px;top:8px;letter-spacing:1px">--</div>
<div class="cell ip" style="left:721px">0</div>
<div class="cell cj" style="left:848px">三层模式</div>
<div class="cell cj" style="left:934px">自协商</div>
<div class="cell cj" style="left:1018px">未开启</div>
<div class="cell" style="left:1304px">GigabitEthernet1/0/5 Interface</div>
<svg class="abs" style="left:1609px;top:6px" width="20" height="20" viewBox="0 0 20 20"><circle cx="9.5" cy="9.2" r="8.9" fill="#f6f7fb" stroke="#dde1ea" stroke-width="1"/><path d="M4.3 14L4.6 10.5L12.1 3.7L15.1 6.9L7.6 13.7Z" fill="#95a0bb"/><path d="M5.2 12.8L5.6 11.6L6.6 12.5Z" fill="#fff"/></svg>
</div>
<div class="row" style="top:361px">
<div class="vl" style="left:194px"></div>
<div class="vl" style="left:407px"></div>
<div class="vl" style="left:492px"></div>
<div class="vl" style="left:705px"></div>
<div class="vl" style="left:833px"></div>
<div class="vl" style="left:918px"></div>
<div class="vl" style="left:1003px"></div>
<div class="vl" style="left:1088px"></div>
<div class="vl" style="left:1188px"></div>
<div class="vl" style="left:1288px"></div>
<div class="vl" style="left:1588px"></div>
<div class="cb"></div>
<div class="cell" style="left:39px">GE1/0/6</div>
<div class="cell" style="left:423px">Down</div>
<div class="cell ip" style="left:508px;top:-8px">--</div>
<div class="cell" style="left:508px;top:8px;letter-spacing:1px">--</div>
<div class="cell ip" style="left:721px">0</div>
<div class="cell cj" style="left:848px">三层模式</div>
<div class="cell cj" style="left:934px">自协商</div>
<div class="cell cj" style="left:1018px">未开启</div>
<div class="cell" style="left:1304px">GigabitEthernet1/0/6 Interface</div>
<svg class="abs" style="left:1609px;top:6px" width="20" height="20" viewBox="0 0 20 20"><circle cx="9.5" cy="9.2" r="8.9" fill="#f6f7fb" stroke="#dde1ea" stroke-width="1"/><path d="M4.3 14L4.6 10.5L12.1 3.7L15.1 6.9L7.6 13.7Z" fill="#95a0bb"/><path d="M5.2 12.8L5.6 11.6L6.6 12.5Z" fill="#fff"/></svg>
</div>
<div class="row st" style="top:394px">
<div class="vl" style="left:24px"></div>
<div class="vl" style="left:194px"></div>
<div class="vl" style="left:407px"></div>
<div class="vl" style="left:492px"></div>
<div class="vl" style="left:705px"></div>
<div class="vl" style="left:833px"></div>
<div class="vl" style="left:918px"></div>
<div class="vl" style="left:1003px"></div>
<div class="vl" style="left:1088px"></div>
<div class="vl" style="left:1188px"></div>
<div class="vl" style="left:1288px"></div>
<div class="vl" style="left:1588px"></div>
<div class="cb"></div>
<div class="cell" style="left:39px">GE1/0/7</div>
<div class="cell" style="left:423px">Down</div>
<div class="cell ip" style="left:508px;top:-8px">--</div>
<div class="cell" style="left:508px;top:8px;letter-spacing:1px">--</div>
<div class="cell ip" style="left:721px">0</div>
<div class="cell cj" style="left:848px">三层模式</div>
<div class="cell cj" style="left:934px">自协商</div>
<div class="cell cj" style="left:1018px">未开启</div>
<div class="cell" style="left:1304px">GigabitEthernet1/0/7 Interface</div>
<svg class="abs" style="left:1609px;top:6px" width="20" height="20" viewBox="0 0 20 20"><circle cx="9.5" cy="9.2" r="8.9" fill="#f6f7fb" stroke="#dde1ea" stroke-width="1"/><path d="M4.3 14L4.6 10.5L12.1 3.7L15.1 6.9L7.6 13.7Z" fill="#95a0bb"/><path d="M5.2 12.8L5.6 11.6L6.6 12.5Z" fill="#fff"/></svg>
</div>
<div class="row" style="top:427px">
<div class="vl" style="left:194px"></div>
<div class="vl" style="left:407px"></div>
<div class="vl" style="left:492px"></div>
<div class="vl" style="left:705px"></div>
<div class="vl" style="left:833px"></div>
<div class="vl" style="left:918px"></div>
<div class="vl" style="left:1003px"></div>
<div class="vl" style="left:1088px"></div>
<div class="vl" style="left:1188px"></div>
<div class="vl" style="left:1288px"></div>
<div class="vl" style="left:1588px"></div>
<div class="cb"></div>
<div class="cell" style="left:39px">GE1/0/8</div>
<div class="cell" style="left:423px">Down</div>
<div class="cell ip" style="left:508px;top:-8px">--</div>
<div class="cell" style="left:508px;top:8px;letter-spacing:1px">--</div>
<div class="cell ip" style="left:721px">0</div>
<div class="cell cj" style="left:848px">三层模式</div>
<div class="cell cj" style="left:934px">自协商</div>
<div class="cell cj" style="left:1018px">未开启</div>
<div class="cell" style="left:1304px">GigabitEthernet1/0/8 Interface</div>
<svg class="abs" style="left:1609px;top:6px" width="20" height="20" viewBox="0 0 20 20"><circle cx="9.5" cy="9.2" r="8.9" fill="#f6f7fb" stroke="#dde1ea" stroke-width="1"/><path d="M4.3 14L4.6 10.5L12.1 3.7L15.1 6.9L7.6 13.7Z" fill="#95a0bb"/><path d="M5.2 12.8L5.6 11.6L6.6 12.5Z" fill="#fff"/></svg>
</div>
<div class="row st" style="top:460px">
<div class="vl" style="left:24px"></div>
<div class="vl" style="left:194px"></div>
<div class="vl" style="left:407px"></div>
<div class="vl" style="left:492px"></div>
<div class="vl" style="left:705px"></div>
<div class="vl" style="left:833px"></div>
<div class="vl" style="left:918px"></div>
<div class="vl" style="left:1003px"></div>
<div class="vl" style="left:1088px"></div>
<div class="vl" style="left:1188px"></div>
<div class="vl" style="left:1288px"></div>
<div class="vl" style="left:1588px"></div>
<div class="cb"></div>
<div class="cell" style="left:39px">GE1/0/9</div>
<div class="cell" style="left:423px">Down</div>
<div class="cell ip" style="left:508px;top:-8px">--</div>
<div class="cell" style="left:508px;top:8px;letter-spacing:1px">--</div>
<div class="cell ip" style="left:721px">0</div>
<div class="cell cj" style="left:848px">三层模式</div>
<div class="cell cj" style="left:934px">自协商</div>
<div class="cell cj" style="left:1018px">未开启</div>
<div class="cell" style="left:1304px">GigabitEthernet1/0/9 Interface</div>
<svg class="abs" style="left:1609px;top:6px" width="20" height="20" viewBox="0 0 20 20"><circle cx="9.5" cy="9.2" r="8.9" fill="#f6f7fb" stroke="#dde1ea" stroke-width="1"/><path d="M4.3 14L4.6 10.5L12.1 3.7L15.1 6.9L7.6 13.7Z" fill="#95a0bb"/><path d="M5.2 12.8L5.6 11.6L6.6 12.5Z" fill="#fff"/></svg>
</div>
<div class="row" style="top:493px">
<div class="vl" style="left:194px"></div>
<div class="vl" style="left:407px"></div>
<div class="vl" style="left:492px"></div>
<div class="vl" style="left:705px"></div>
<div class="vl" style="left:833px"></div>
<div class="vl" style="left:918px"></div>
<div class="vl" style="left:1003px"></div>
<div class="vl" style="left:1088px"></div>
<div class="vl" style="left:1188px"></div>
<div class="vl" style="left:1288px"></div>
<div class="vl" style="left:1588px"></div>
<div class="cb"></div>
<div class="cell" style="left:39px">GE1/0/10</div>
<div class="cell" style="left:423px">Down</div>
<div class="cell ip" style="left:508px;top:-8px">--</div>
<div class="cell" style="left:508px;top:8px;letter-spacing:1px">--</div>
<div class="cell ip" style="left:721px">0</div>
<div class="cell cj" style="left:848px">三层模式</div>
<div class="cell cj" style="left:934px">自协商</div>
<div class="cell cj" style="left:1018px">未开启</div>
<div class="cell" style="left:1304px">GigabitEthernet1/0/10 Interface</div>
<svg class="abs" style="left:1609px;top:6px" width="20" height="20" viewBox="0 0 20 20"><circle cx="9.5" cy="9.2" r="8.9" fill="#f6f7fb" stroke="#dde1ea" stroke-width="1"/><path d="M4.3 14L4.6 10.5L12.1 3.7L15.1 6.9L7.6 13.7Z" fill="#95a0bb"/><path d="M5.2 12.8L5.6 11.6L6.6 12.5Z" fill="#fff"/></svg>
</div>
<div class="row st" style="top:526px">
<div class="vl" style="left:24px"></div>
<div class="vl" style="left:194px"></div>
<div class="vl" style="left:407px"></div>
<div class="vl" style="left:492px"></div>
<div class="vl" style="left:705px"></div>
<div class="vl" style="left:833px"></div>
<div class="vl" style="left:918px"></div>
<div class="vl" style="left:1003px"></div>
<div class="vl" style="left:1088px"></div>
<div class="vl" style="left:1188px"></div>
<div class="vl" style="left:1288px"></div>
<div class="vl" style="left:1588px"></div>
<div class="cb"></div>
<div class="cell" style="left:39px">GE1/0/11</div>
<div class="cell" style="left:423px">Down</div>
<div class="cell ip" style="left:508px;top:-8px">--</div>
<div class="cell" style="left:508px;top:8px;letter-spacing:1px">--</div>
<div class="cell ip" style="left:721px">0</div>
<div class="cell cj" style="left:848px">三层模式</div>
<div class="cell cj" style="left:934px">自协商</div>
<div class="cell cj" style="left:1018px">未开启</div>
<div class="cell" style="left:1304px">GigabitEthernet1/0/11 Interface</div>
<svg class="abs" style="left:1609px;top:6px" width="20" height="20" viewBox="0 0 20 20"><circle cx="9.5" cy="9.2" r="8.9" fill="#f6f7fb" stroke="#dde1ea" stroke-width="1"/><path d="M4.3 14L4.6 10.5L12.1 3.7L15.1 6.9L7.6 13.7Z" fill="#95a0bb"/><path d="M5.2 12.8L5.6 11.6L6.6 12.5Z" fill="#fff"/></svg>
</div>
<div class="row" style="top:559px">
<div class="vl" style="left:194px"></div>
<div class="vl" style="left:407px"></div>
<div class="vl" style="left:492px"></div>
<div class="vl" style="left:705px"></div>
<div class="vl" style="left:833px"></div>
<div class="vl" style="left:918px"></div>
<div class="vl" style="left:1003px"></div>
<div class="vl" style="left:1088px"></div>
<div class="vl" style="left:1188px"></div>
<div class="vl" style="left:1288px"></div>
<div class="vl" style="left:1588px"></div>
<div class="cb"></div>
<div class="cell" style="left:39px">Cellular1/0/0</div>
<div class="cell" style="left:423px">Down</div>
<div class="cell ip" style="left:508px;top:-8px">--</div>
<div class="cell" style="left:508px;top:8px;letter-spacing:1px">--</div>
<div class="cell cj" style="left:934px">全双工</div>
<div class="cell cj" style="left:1018px">不支持</div>
<div class="cell" style="left:1304px">Cellular1/0/0 Interface</div>
<svg class="abs" style="left:1609px;top:6px" width="20" height="20" viewBox="0 0 20 20"><circle cx="9.5" cy="9.2" r="8.9" fill="#f6f7fb" stroke="#dde1ea" stroke-width="1"/><path d="M4.3 14L4.6 10.5L12.1 3.7L15.1 6.9L7.6 13.7Z" fill="#95a0bb"/><path d="M5.2 12.8L5.6 11.6L6.6 12.5Z" fill="#fff"/></svg>
</div>
<div class="row st" style="top:592px">
<div class="vl" style="left:24px"></div>
<div class="vl" style="left:194px"></div>
<div class="vl" style="left:407px"></div>
<div class="vl" style="left:492px"></div>
<div class="vl" style="left:705px"></div>
<div class="vl" style="left:833px"></div>
<div class="vl" style="left:918px"></div>
<div class="vl" style="left:1003px"></div>
<div class="vl" style="left:1088px"></div>
<div class="vl" style="left:1188px"></div>
<div class="vl" style="left:1288px"></div>
<div class="vl" style="left:1588px"></div>
<div class="cb"></div>
<div class="cell" style="left:39px">Cellular1/0/1</div>
<div class="cell" style="left:423px">Down</div>
<div class="cell ip" style="left:508px;top:-8px">--</div>
<div class="cell" style="left:508px;top:8px;letter-spacing:1px">--</div>
<div class="cell cj" style="left:934px">全双工</div>
<div class="cell cj" style="left:1018px">不支持</div>
<div class="cell" style="left:1304px">Cellular1/0/1 Interface</div>
<svg class="abs" style="left:1609px;top:6px" width="20" height="20" viewBox="0 0 20 20"><circle cx="9.5" cy="9.2" r="8.9" fill="#f6f7fb" stroke="#dde1ea" stroke-width="1"/><path d="M4.3 14L4.6 10.5L12.1 3.7L15.1 6.9L7.6 13.7Z" fill="#95a0bb"/><path d="M5.2 12.8L5.6 11.6L6.6 12.5Z" fill="#fff"/></svg>
</div>
<div class="row" style="top:625px">
<div class="vl" style="left:194px"></div>
<div class="vl" style="left:407px"></div>
<div class="vl" style="left:492px"></div>
<div class="vl" style="left:705px"></div>
<div class="vl" style="left:833px"></div>
<div class="vl" style="left:918px"></div>
<div class="vl" style="left:1003px"></div>
<div class="vl" style="left:1088px"></div>
<div class="vl" style="left:1188px"></div>
<div class="vl" style="left:1288px"></div>
<div class="vl" style="left:1588px"></div>
<div class="cb"></div>
<div class="cell" style="left:39px">NULL0</div>
<div class="cell" style="left:423px">Up</div>
<div class="cell ip" style="left:508px;top:-8px">--</div>
<div class="cell" style="left:508px;top:8px;letter-spacing:1px">--</div>
<div class="cell cj" style="left:848px">三层模式</div>
<div class="cell cj" style="left:934px">全双工</div>
<div class="cell cj" style="left:1018px">不支持</div>
<div class="cell" style="left:1304px">NULL0 Interface</div>
<svg class="abs" style="left:1609px;top:6px" width="20" height="20" viewBox="0 0 20 20"><circle cx="9.5" cy="9.2" r="8.9" fill="#f6f7fb" stroke="#dde1ea" stroke-width="1"/><path d="M4.3 14L4.6 10.5L12.1 3.7L15.1 6.9L7.6 13.7Z" fill="#95a0bb"/><path d="M5.2 12.8L5.6 11.6L6.6 12.5Z" fill="#fff"/></svg>
</div>
<div class="row st" style="top:658px">
<div class="vl" style="left:24px"></div>
<div class="vl" style="left:194px"></div>
<div class="vl" style="left:407px"></div>
<div class="vl" style="left:492px"></div>
<div class="vl" style="left:705px"></div>
<div class="vl" style="left:833px"></div>
<div class="vl" style="left:918px"></div>
<div class="vl" style="left:1003px"></div>
<div class="vl" style="left:1088px"></div>
<div class="vl" style="left:1188px"></div>
<div class="vl" style="left:1288px"></div>
<div class="vl" style="left:1588px"></div>
<div class="cb"></div>
<div class="cell" style="left:39px">InLoop0</div>
<div class="cell" style="left:423px">Up</div>
<div class="cell ip" style="left:508px;top:-8px">127.0.0.1/255.0.0.0</div>
<div class="cell" style="left:508px;top:8px;letter-spacing:1px">--</div>
<div class="cell cj" style="left:848px">三层模式</div>
<div class="cell cj" style="left:934px">全双工</div>
<div class="cell cj" style="left:1018px">不支持</div>
<div class="cell" style="left:1304px">InLoopBack0 Interface</div>
</div>
<div class="row" style="top:691px">
<div class="vl" style="left:194px"></div>
<div class="vl" style="left:407px"></div>
<div class="vl" style="left:492px"></div>
<div class="vl" style="left:705px"></div>
<div class="vl" style="left:833px"></div>
<div class="vl" style="left:918px"></div>
<div class="vl" style="left:1003px"></div>
<div class="vl" style="left:1088px"></div>
<div class="vl" style="left:1188px"></div>
<div class="vl" style="left:1288px"></div>
<div class="vl" style="left:1588px"></div>
<div class="cb"></div>
<div class="cell" style="left:39px">REG0</div>
<div class="cell" style="left:423px">Up</div>
<div class="cell ip" style="left:508px;top:-8px">--</div>
<div class="cell" style="left:508px;top:8px;letter-spacing:1px">--</div>
<div class="cell cj" style="left:848px">三层模式</div>
<div class="cell cj" style="left:934px">全双工</div>
<div class="cell cj" style="left:1018px">不支持</div>
<div class="cell" style="left:1304px">Register-Tunnel0 Interface</div>
</div>
<div class="abs" style="left:253px;top:724px;width:1638px;height:1px;background:#e8e9eb"></div>
<div class="abs" style="left:787px;top:161px;width:6px;height:6px;background:#eef1f5"></div>
<div class="abs" style="left:793px;top:161px;width:6px;height:6px;background:#e8edf1"></div>
<div class="abs" style="left:799px;top:161px;width:6px;height:6px;background:#e9eff3"></div>
<div class="abs" style="left:823px;top:161px;width:6px;height:6px;background:#fff"></div>
<div class="abs" style="left:829px;top:161px;width:6px;height:6px;background:#fff"></div>
<div class="abs" style="left:841px;top:161px;width:6px;height:6px;background:#eef3f6"></div>
<div class="abs" style="left:847px;top:161px;width:6px;height:6px;background:#eef3f6"></div>
<div class="abs" style="left:787px;top:167px;width:6px;height:6px;background:#a9a9a9"></div>
<div class="abs" style="left:793px;top:167px;width:6px;height:6px;background:#ddd6d6"></div>
<div class="abs" style="left:829px;top:167px;width:6px;height:6px;background:#fef6f0"></div>
<div class="abs" style="left:835px;top:167px;width:6px;height:6px;background:#9aa0a6"></div>
<div class="abs" style="left:847px;top:167px;width:6px;height:6px;background:#aeb3c4"></div>
<div class="abs" style="left:793px;top:172px;width:6px;height:6px;background:#cdcdcd"></div>
<div class="abs" style="left:799px;top:172px;width:6px;height:6px;background:#e7ded9"></div>
<div class="abs" style="left:805px;top:172px;width:6px;height:6px;background:#dae3ef"></div>
<div class="abs" style="left:811px;top:172px;width:6px;height:6px;background:#ececec"></div>
<div class="abs" style="left:817px;top:172px;width:6px;height:6px;background:#d2c6c1"></div>
<div class="abs" style="left:823px;top:172px;width:6px;height:6px;background:#b8aca4"></div>
<div class="abs" style="left:829px;top:172px;width:6px;height:6px;background:#d6e0ec"></div>
<div class="abs" style="left:835px;top:172px;width:6px;height:6px;background:#ddcfcf"></div>
<div class="abs" style="left:841px;top:172px;width:6px;height:6px;background:#b3b8c2"></div>
<div class="abs" style="left:847px;top:172px;width:6px;height:6px;background:#dbe8e6"></div>
<div class="abs" style="left:-21px;top:464px;width:40px;height:40px;border-radius:50%;background:#b5cfee;box-shadow:0 1px 5px rgba(0,0,0,0.10)"></div>
<svg class="abs" style="left:0;top:470px" width="14" height="28" viewBox="0 0 14 28"><path d="M0 6.8H4" stroke="#e4edf8" stroke-width="1"/><path d="M0 24L4.8 11.4L9.7 24M2 19.5H7.8" fill="none" stroke="#e4edf8" stroke-width="1.6"/></svg>
</body></html>
